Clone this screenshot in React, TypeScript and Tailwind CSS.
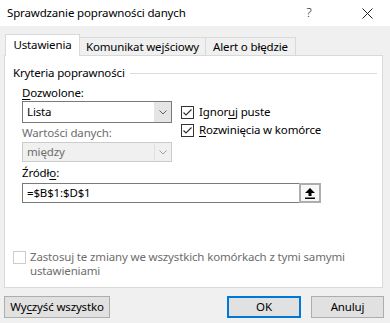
import React from 'react'

const font = { fontFamily: '"Noto Sans", "Liberation Sans", sans-serif' }

function Chevron({ color = '#606060' }: { color?: string }) {
  return (
    <svg width="8" height="5" viewBox="0 0 8 5">
      <polyline points="0.5,0.5 4,4 7.5,0.5" fill="none" stroke={color} strokeWidth="1" />
    </svg>
  )
}

function Check({ checked, disabled }: { checked?: boolean; disabled?: boolean }) {
  return (
    <span
      className={`w-[13px] h-[13px] shrink-0 border bg-white flex items-center justify-center ${
        disabled ? 'border-[#cccccc]' : 'border-[#333333]'
      }`}
    >
      {checked && (
        <svg width="11" height="11" viewBox="0 0 11 11">
          <polyline points="1.5,5.5 4,8 9.5,2.5" fill="none" stroke="#333333" strokeWidth="1.2" />
        </svg>
      )}
    </span>
  )
}

function Select({ value, disabled }: { value: string; disabled?: boolean }) {
  return (
    <div
      className={`flex w-[150px] border ${
        disabled ? 'h-[20px] border-[#cccccc] bg-[#f0f0f0] text-[#6d6d6d]' : 'h-[22px] border-[#7a7a7a] bg-white text-black'
      }`}
    >
      <div className="flex-1 flex items-center pl-[4px] leading-none">{value}</div>
      <div
        className={`w-[17px] flex items-center justify-center ${
          disabled ? 'bg-[#f0f0f0] border-l border-[#e0e0e0]' : 'bg-[#e5e5e5] border-l border-[#e5e5e5]'
        }`}
      >
        <Chevron color={disabled ? '#a0a0a0' : '#606060'} />
      </div>
    </div>
  )
}

export default function App() {
  return (
    <div className="w-[390px] h-[323px] bg-[#f0f0f0] flex flex-col text-[11.5px] tracking-[-0.15px] text-black overflow-hidden" style={font}>
      {/* pasek tytułu */}
      <div className="h-[26px] bg-white flex items-center shrink-0">
        <span className="pl-[7px] flex-1 text-[11.5px]">Sprawdzanie poprawności danych</span>
        <span className="w-[20px] text-center text-[13px] font-light mr-[25px] text-[#222]">?</span>
        <span className="w-[46px] flex justify-center">
          <svg width="11" height="11" viewBox="0 0 11 11">
            <line x1="0.5" y1="0.5" x2="10.5" y2="10.5" stroke="#222" strokeWidth="1" />
            <line x1="10.5" y1="0.5" x2="0.5" y2="10.5" stroke="#222" strokeWidth="1" />
          </svg>
        </span>
      </div>

      {/* zakładki */}
      <div className="flex items-end pl-[5px] mt-[8px] h-[22px] relative z-10">
        <div className="w-[75px] h-[22px] bg-white border border-b-0 border-[#d9d9d9] flex items-center justify-center pb-[1px]">
          Ustawienia
        </div>
        <div className="w-[126px] h-[19px] border border-l-0 border-[#d9d9d9] flex items-center justify-center">
          Komunikat wejściowy
        </div>
        <div className="w-[90px] h-[19px] border border-l-0 border-[#d9d9d9] flex items-center justify-center">
          Alert o błędzie
        </div>
      </div>

      {/* panel */}
      <div className="ml-[4px] mr-[7px] -mt-px h-[233px] bg-white border border-[#d9d9d9] pl-[8px] pr-[5px] pt-[9px] flex flex-col">
        <div className="h-[16px] flex items-center">
          <span>Kryteria poprawności</span>
          <span className="flex-1 h-px bg-[#dcdcdc] ml-[5px]" />
        </div>

        <div className="ml-[9px] mt-[4px] flex">
          <div className="w-[150px] flex flex-col">
            <div className="h-[16px] flex items-center">
              <span><span className="underline underline-offset-2">D</span>ozwolone:</span>
            </div>
            <Select value="Lista" />
            <div className="h-[16px] mt-[2px] flex items-center text-[#6d6d6d]">Wartości danych:</div>
            <div className="mt-[1px]">
              <Select value="między" disabled />
            </div>
          </div>
          <div className="ml-[9px] pt-[18px] flex flex-col">
            <label className="h-[18px] flex items-center gap-[5px]">
              <Check checked />
              <span>Ignor<span className="underline underline-offset-2">u</span>j puste</span>
            </label>
            <label className="h-[18px] flex items-center gap-[5px]">
              <Check checked />
              <span><span className="underline underline-offset-2">R</span>ozwinięcia w komórce</span>
            </label>
          </div>
        </div>

        <div className="ml-[9px] mt-[3px] h-[16px] flex items-center">
          <span>Źródł<span className="underline underline-offset-2">o</span>:</span>
        </div>
        <div className="ml-[9px] mt-[2px] flex h-[20px] w-[299px]">
          <div className="flex-1 border border-[#7a7a7a] border-r-0 bg-white flex items-center pl-[4px] leading-none">
            =$B$1:$D$1
          </div>
          <div className="w-[22px] border-2 border-[#adadad] bg-[#f7f7f7] flex items-center justify-center">
            <svg width="10" height="11" viewBox="0 0 10 11">
              <polygon points="5,0 10,5 6.5,5 6.5,8 3.5,8 3.5,5 0,5" fill="#000" />
              <rect x="0" y="9.5" width="10" height="1.5" fill="#000" />
            </svg>
          </div>
        </div>

        <div className="mt-[47px] flex items-start gap-[4px] text-[#6d6d6d] leading-[14px]">
          <span className="mt-[1px]">
            <Check disabled />
          </span>
          <span className="w-[345px]">Zastosuj te zmiany we wszystkich komórkach z tymi samymi ustawieniami</span>
        </div>
      </div>

      {/* przyciski */}
      <div className="flex mt-[8px] pl-[4px] pr-[6px]">
        <button className="w-[106px] h-[22px] bg-[#e1e1e1] border border-[#adadad] flex items-center justify-center">
          <span>Wy<span className="underline underline-offset-2">c</span>zyść wszystko</span>
        </button>
        <button className="ml-auto w-[74px] h-[22px] bg-[#e1e1e1] border-2 border-[#0078d7] flex items-center justify-center">
          OK
        </button>
        <button className="ml-[10px] w-[73px] h-[22px] bg-[#e1e1e1] border border-[#adadad] flex items-center justify-center">
          Anuluj
        </button>
      </div>
    </div>
  )
}
